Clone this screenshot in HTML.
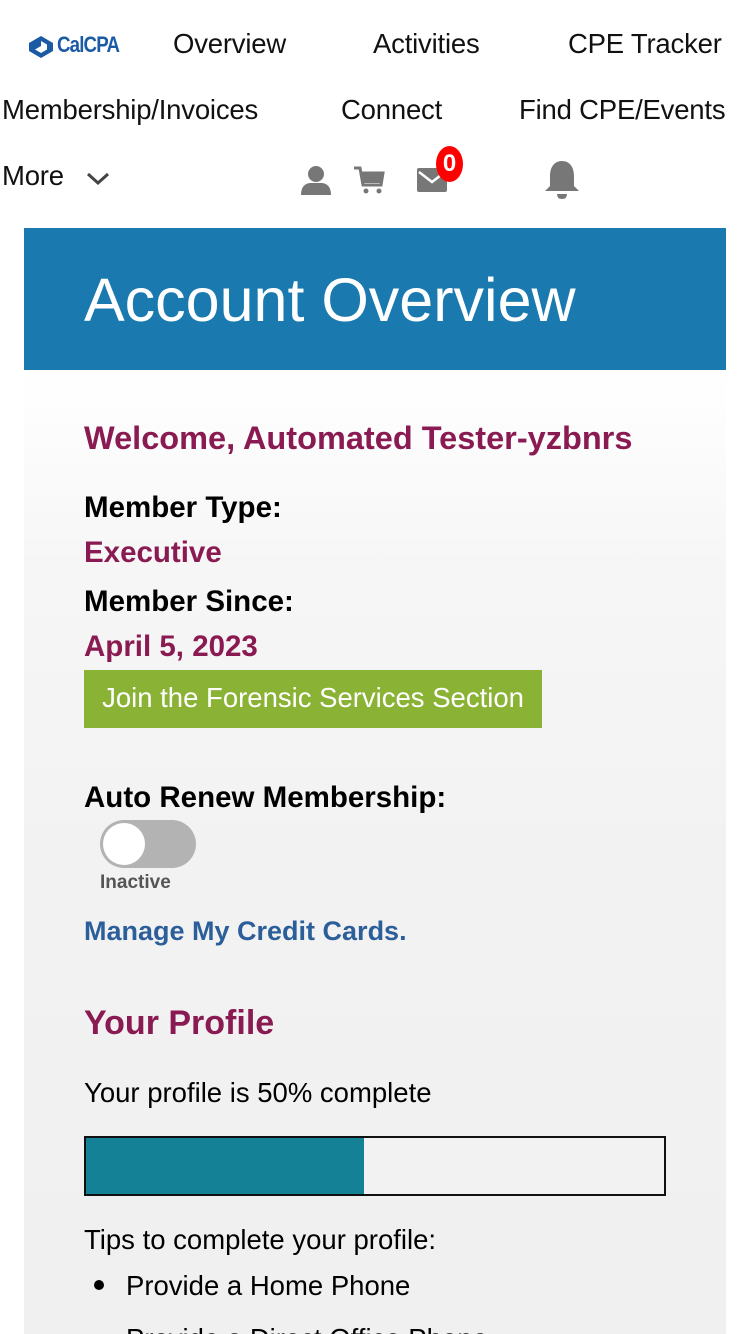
<!DOCTYPE html>
<html style="overflow:hidden;height:1334px"><head><meta charset="utf-8"><style>
*{margin:0;padding:0;box-sizing:border-box}
body{width:750px;height:1334px;overflow:hidden;background:#fff;font-family:"Liberation Sans",sans-serif;position:relative;color:#000}
.a{position:absolute;white-space:nowrap}
.nav{font-size:27.5px;color:#111;letter-spacing:-0.2px}
.panel{position:absolute;left:24px;top:370px;width:702px;height:964px;background:linear-gradient(#fff 0px,#f6f6f6 200px,#f2f2f2 500px,#f0f0f0 964px)}
.b{font-weight:bold;font-size:29.5px}
.m{color:#8a1a52}
.t{font-size:27.5px}
</style></head><body>
<svg class="a" style="left:29px;top:36px" width="24" height="22" viewBox="0 0 24 22"><path d="M12 0L24 7V15L12 22L0 15V7Z" fill="#1b5aa5"/><path d="M12 5L18 8.5V13.5L12 17L6 13.5L12 10V5Z" fill="#fff"/></svg>
<div class="a" style="left:57px;top:32px;font-size:22px;font-weight:bold;color:#1b5aa5;letter-spacing:-1px;transform:scaleX(0.85);transform-origin:left">CalCPA</div>
<div class="a nav" style="left:173px;top:28px">Overview</div>
<div class="a nav" style="left:373px;top:28px">Activities</div>
<div class="a nav" style="left:568px;top:28px">CPE Tracker</div>
<div class="a nav" style="left:2px;top:94px">Membership/Invoices</div>
<div class="a nav" style="left:341px;top:94px">Connect</div>
<div class="a nav" style="left:519px;top:94px">Find CPE/Events</div>
<div class="a nav" style="left:2px;top:160px">More</div>
<svg class="a" style="left:85px;top:170px" width="26" height="18" viewBox="0 0 26 18"><path d="M3 4L13 13L23 4" stroke="#444" stroke-width="3" fill="none"/></svg>
<svg class="a" style="left:300px;top:164px" width="32" height="32" viewBox="0 0 32 32"><circle cx="16" cy="10" r="8" fill="#777"/><path d="M1 31Q1 20 10 19H22Q31 20 31 31Z" fill="#777"/></svg>
<svg class="a" style="left:353px;top:165px" width="32" height="30" viewBox="0 0 32 30"><path d="M1 3H7L10 20H28L30 8H8" stroke="#777" stroke-width="3" fill="none"/><path d="M9 9H29L27 18H11Z" fill="#777"/><circle cx="13" cy="26" r="2.5" fill="#777"/><circle cx="26" cy="26" r="2.5" fill="#777"/></svg>
<svg class="a" style="left:417px;top:168px" width="30" height="24" viewBox="0 0 30 24"><rect width="30" height="24" rx="2" fill="#777"/><path d="M2 4L15 14L28 4" stroke="#fff" stroke-width="2.5" fill="none"/></svg>
<div class="a" style="left:436px;top:146px;width:27px;height:36px;border-radius:50%;background:#f00;color:#fff;font-weight:bold;font-size:24px;text-align:center;line-height:36px">0</div>
<svg class="a" style="left:542px;top:160px" width="40" height="40" viewBox="0 0 40 40"><path d="M20 1C11 1 8 9 8 16V26L3 31H37L32 26V16C32 9 29 1 20 1Z" fill="#777"/><path d="M15 34H25Q25 39 20 39Q15 39 15 34Z" fill="#777"/></svg>
<div class="a" style="left:24px;top:228px;width:702px;height:142px;background:#1a7aaf"></div>
<div class="a" style="left:84px;top:265px;font-size:61px;color:#fff">Account Overview</div>
<div class="panel"></div>
<div class="a b m" style="left:84px;top:420px;font-size:32.5px">Welcome, Automated Tester-yzbnrs</div>
<div class="a b" style="left:84px;top:491px">Member Type:</div>
<div class="a b m" style="left:84px;top:536px">Executive</div>
<div class="a b" style="left:84px;top:585px">Member Since:</div>
<div class="a b m" style="left:84px;top:630px">April 5, 2023</div>
<div class="a" style="left:84px;top:670px;width:458px;height:58px;background:#8ab234;color:#fff;font-size:27.5px;line-height:56px;text-align:center">Join the Forensic Services Section</div>
<div class="a b" style="left:84px;top:781px">Auto Renew Membership:</div>
<div class="a" style="left:100px;top:820px;width:96px;height:48px;border-radius:24px;background:#b3b3b3"></div>
<div class="a" style="left:103px;top:823px;width:42px;height:42px;border-radius:50%;background:#fff"></div>
<div class="a" style="left:100px;top:872px;font-size:19px;color:#555;font-weight:bold">Inactive</div>
<div class="a" style="left:84px;top:916px;font-size:27px;font-weight:bold;color:#2c5f9a">Manage My Credit Cards.</div>
<div class="a b m" style="left:84px;top:1004px;font-size:34px">Your Profile</div>
<div class="a t" style="left:84px;top:1077px">Your profile is 50% complete</div>
<div class="a" style="left:84px;top:1136px;width:582px;height:60px;border:2px solid #111;background:#f2f2f2"><div style="width:278px;height:100%;background:#148196"></div></div>
<div class="a t" style="left:84px;top:1224px">Tips to complete your profile:</div>
<div class="a" style="left:94px;top:1280px;width:10px;height:10px;border-radius:50%;background:#000"></div>
<div class="a t" style="left:126px;top:1270px">Provide a Home Phone</div>
<div class="a t" style="left:126px;top:1323px">Provide a Direct Office Phone</div>
</body></html>
